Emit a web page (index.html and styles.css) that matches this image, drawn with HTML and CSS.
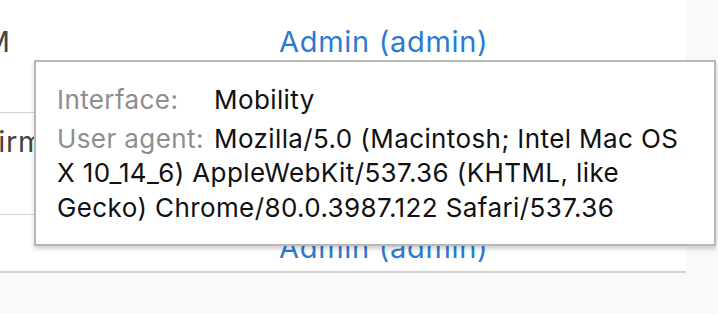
FILE: index.html
```html
<!DOCTYPE html>
<html>
<head>
<meta charset="utf-8">
<link rel="stylesheet" href="styles.css">
</head>
<body>
<div class="page">
  <div class="table">
    <div class="row row1">
      <div class="cell first">3 PM</div>
      <div class="cell user">Admin (admin)</div>
    </div>
    <div class="row row2">
      <div class="cell first">Confirmed</div>
      <div class="cell user"></div>
    </div>
    <div class="row row3">
      <div class="cell first"></div>
      <div class="cell user">Admin (admin)</div>
    </div>
  </div>
  <div class="tooltip">
    <div class="line"><span class="label">Interface:</span><span class="value">Mobility</span></div>
    <div class="line"><span class="label">User agent:</span><span class="value">Mozilla/5.0 (Macintosh; Intel Mac OS X 10_14_6) AppleWebKit/537.36 (KHTML, like Gecko) Chrome/80.0.3987.122 Safari/537.36</span></div>
  </div>
</div>
</body>
</html>
```

FILE: styles.css
```css
html, body {
  margin: 0;
  padding: 0;
  background: #f9f9f9;
}
body {
  font-family: Inter, "Noto Sans", sans-serif;
  width: 718px;
  height: 314px;
  overflow: hidden;
  position: relative;
}
.page {
  width: 686px;
}
.table {
  background: #fff;
  border-bottom: 2px solid #d2d2d2;
  overflow: hidden;
  font-size: 29px;
  line-height: 40px;
  letter-spacing: 0.7px;
}
.row {
  display: grid;
  grid-template-columns: 350px 1fr;
  margin-left: -71px;
  border-bottom: 1px solid #d2d2d2;
  box-sizing: border-box;
}
.row1 { height: 113px; padding-top: 22px; }
.row2 { height: 102px; padding-top: 9px; }
.row3 { height: 56px; padding-top: 13px; border-bottom: none; }
.cell.first {
  color: #444;
  white-space: nowrap;
}
.row1 .cell.first {
  padding-left: 8px;
}
.cell.user {
  color: #2b7bd3;
}
.tooltip {
  position: absolute;
  left: 34px;
  top: 60px;
  width: 682px;
  height: 186px;
  box-sizing: border-box;
  background: #fff;
  border: 2px solid #b8b8b8;
  box-shadow: 0 3px 4px rgba(0, 0, 0, 0.18);
  padding: 21px 21px;
  color: #111;
  font-size: 26px;
  line-height: 34.5px;
  letter-spacing: 0.4px;
}
.line + .line {
  margin-top: 4px;
}
.label {
  display: inline-block;
  min-width: 157px;
  color: #8e8e8e;
}
.line .value { color: #111; }
```
